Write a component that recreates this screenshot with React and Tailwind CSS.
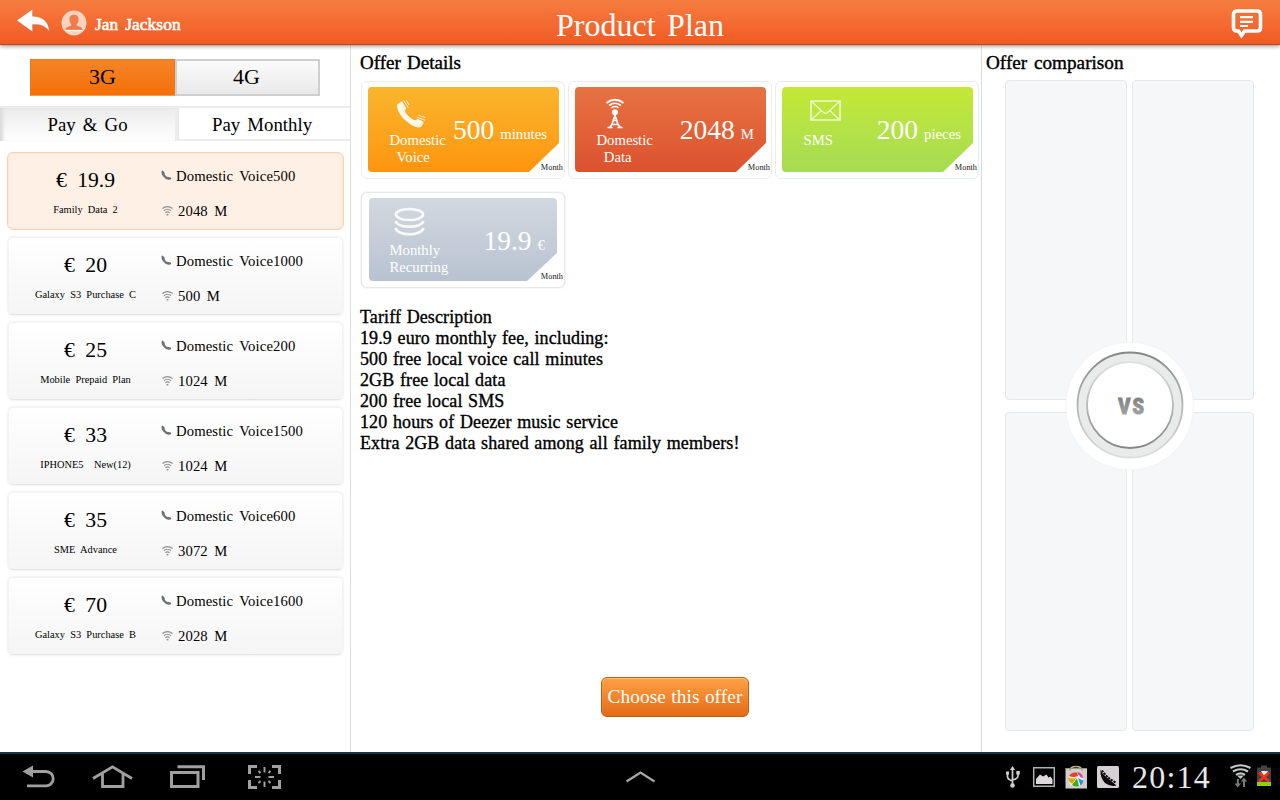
import React from "react";

const plans = [
  { price: "19.9", name: "Family Data 2", voice: "500", data: "2048 M", selected: true },
  { price: "20", name: "Galaxy S3 Purchase C", voice: "1000", data: "500 M" },
  { price: "25", name: "Mobile Prepaid Plan", voice: "200", data: "1024 M" },
  { price: "33", name: "IPHONE5\u00a0 New(12)", voice: "1500", data: "1024 M" },
  { price: "35", name: "SME Advance", voice: "600", data: "3072 M" },
  { price: "70", name: "Galaxy S3 Purchase B", voice: "1600", data: "2028 M" },
];

const tariff = [
  "Tariff Description",
  "19.9 euro monthly fee, including:",
  "500 free local voice call minutes",
  "2GB free local data",
  "200 free local SMS",
  "120 hours of Deezer music service",
  "Extra 2GB data shared among all family members!",
];

function SmallPhone() {
  return (
    <svg className="h-[11px] w-[11px]" viewBox="0 0 11 11">
      <path d="M1.700.4 3.700 2.700Q3.200 4.200 4.600 5.700 6 7.100 7.400 6.900L9.800 7.600 10.200 9Q9 10 7.600 9.800 4.500 9.300 2 6.200.1 3.700.5 1.300z" fill="#6b7274" />
    </svg>
  );
}

function SmallWifi() {
  return (
    <svg className="h-[10px] w-[11px]" viewBox="0 0 11 10" fill="none" stroke="#8c8f8f" strokeWidth="1.100">
      <path d="M.4 2.500Q5.500-1.300 10.600 2.500M1.900 4.700Q5.500 1.900 9.100 4.700M3.400 6.700Q5.500 5 7.600 6.700" />
      <path d="M4.600 8.700h1.800" strokeWidth="1.500" />
    </svg>
  );
}

function PlanRow({ plan }) {
  return (
    <div
      className={
        plan.selected
          ? "flex h-[78px] rounded-[6px] border border-[#fbd3b0] bg-[#fff0e5] shadow-[inset_0_0_2px_#fbd3b0]"
          : "mx-px flex h-[78px] rounded-[5px] border border-[#f3f3f3] border-b-[#e4e4e4] bg-linear-to-b from-white to-[#f5f5f5] shadow-[0_0_3px_#e2e2e2]"
      }
    >
      <div className={"flex flex-col items-center pt-[15px] " + (plan.selected ? "w-[155px]" : "w-[153px]")}>
        <div className="text-[21.7px] leading-6 [word-spacing:5px]">€ {plan.price}</div>
        <div className="mt-[11px] text-[10.4px] leading-[14px] whitespace-nowrap [word-spacing:2.6px]">{plan.name}</div>
      </div>
      <div className={"flex flex-col pt-[14px] text-[14.7px] leading-[18px] tracking-[0.11px] [word-spacing:2.600px] " + (plan.selected ? "-ml-[2px]" : "-ml-[1px]")}>
        <div className="flex items-start">
          <span className="w-[15px] pt-[3px]"><SmallPhone /></span>
          <span>Domestic Voice{plan.voice}</span>
        </div>
        <div className="mt-[17px] flex items-start">
          <span className="w-[17px] pt-[4px] pl-px"><SmallWifi /></span>
          <span>{plan.data}</span>
        </div>
      </div>
    </div>
  );
}

function PhoneIcon() {
  return (
    <svg className="h-[30px] w-[32px]" viewBox="0 0 32 30" fill="#fff" fillOpacity=".9">
      <path d="M1.300 5.200 6 2.300 10.300 9.500 8.800 12C10.500 15.800 15.300 20.200 19.200 21.300L21.800 19.800 27.800 23 25.300 27.800C21.500 29.800 15.500 26.800 9.300 21.300 3.200 15.500.2 8.800 1.300 5.200z" />
      <path d="M7.800 1.500l4.500 7.200M10.300 1.300l2.600 4.500M20.800 18.200l8.300 3M22.500 16.300l6.800 2.300" stroke="#fff" strokeOpacity=".85" strokeWidth="1" fill="none" />
    </svg>
  );
}

function TowerIcon() {
  return (
    <svg className="h-[32px] w-[20px]" viewBox="0 0 20 32" fill="none" stroke="#fff">
      <path d="M1.500 5Q10-1.500 18.500 5" strokeWidth="2" />
      <path d="M4.200 7.500Q10 3 15.800 7.500" strokeWidth="1.700" />
      <path d="M6.500 9.800Q10 7.300 13.500 9.800" strokeWidth="1.500" />
      <circle cx="10" cy="14.300" r="3" fill="#fff" stroke="none" />
      <path d="M10 16v5M9.300 19 7.200 26 4.800 29.500M10.700 19l2.100 7 2.400 3.500M8.500 22.500h3M7 26.500h6" strokeWidth="1.700" />
      <path d="M2.500 29.500h5M12.500 29.500h5" strokeWidth="1.500" />
    </svg>
  );
}

function MailIcon() {
  return (
    <svg className="h-[21px] w-[31px]" viewBox="0 0 31 21" fill="none" stroke="#fff" strokeOpacity=".75">
      <path d="M1 1h29v19H1z" strokeWidth="1.600" />
      <path d="M1 1l12.500 11.500q2 1.600 4 0L30 1M1 20l10.500-9.500M30 20l-10.500-9.500" strokeWidth="1.200" />
    </svg>
  );
}

function CoinsIcon() {
  return (
    <svg className="h-[30px] w-[32px]" viewBox="0 0 32 30" fill="none" stroke="#fff" strokeOpacity=".85" strokeWidth="2.700">
      <ellipse cx="15.500" cy="7.500" rx="13.500" ry="5.500" />
      <path d="M1.500 14C4 21.500 27 21.500 29.500 14M1.500 21C4 29.500 27 29.500 29.500 21" />
    </svg>
  );
}

function OfferCard({ frame, panel, column, icon, iconBox, label, value, unit }) {
  return (
    <div className={"relative rounded-[6px] border bg-white " + frame}>
      <div className={"flex justify-between rounded-[4px] text-white " + panel}>
        <div className={"flex flex-col " + column}>
          <div className={iconBox}>{icon}</div>
          <div className="text-[14.700px] leading-[17px] whitespace-pre">{label}</div>
        </div>
        <div className="flex items-baseline pt-[27px] pr-[12px] leading-[32px]">
          <span className="text-[27.500px]">{value}</span>
          <span className="ml-[6px] text-[14.800px]">{unit}</span>
        </div>
      </div>
      <span className="absolute right-[1px] bottom-[4px] text-[8.300px] leading-[12px] text-[#222]">Month</span>
    </div>
  );
}

const slot = "rounded-[4px] border border-[#e6e8ea] bg-[#f6f7f9]";

export default function App() {
  return (
    <div className="flex h-[800px] w-[1280px] flex-col overflow-hidden bg-white text-black [font-family:'Liberation_Serif',serif]">
      <header className="z-10 flex h-[45px] shrink-0 border-b border-[#b9470f] bg-linear-to-b from-[#f67c40] to-[#f15a22] text-white shadow-[0_1px_4px_#888]">
        <div className="flex flex-1 items-center pr-[17px]">
          <svg className="ml-[16px] h-[26px] w-[35px]" viewBox="0 0 35 26">
            <path d="M.8 11.500 16.500.3v7C26 7.500 32.500 12 33.300 22 29 16.500 23.500 15 16.500 15.500v7.300z" fill="#fff" stroke="#b8461a" strokeOpacity=".4" strokeWidth=".6" />
          </svg>
          <svg className="mt-[2px] ml-[10px] h-[26px] w-[26px]" viewBox="0 0 26 26">
            <circle cx="13" cy="13" r="12.500" fill="#fbd3c0" />
            <path d="M13 4.500c3 0 4.600 2.200 4.600 5 0 2-.8 3.700-1.900 4.700l.2 1.300 4.100 1.700c1 .5 1.500 1.300 1.500 3.300h-17c0-2 .5-2.800 1.500-3.300l4.100-1.700.2-1.300c-1.100-1-1.900-2.700-1.900-4.700 0-2.800 1.600-5 4.600-5z" fill="#f07c4d" />
            <path d="M4.500 20.500h17" stroke="#fff" strokeWidth="1.200" />
          </svg>
          <span className="ml-[8px] pt-[5px] text-[17.300px] tracking-[0.100px] [-webkit-text-stroke:0.600px_white] [word-spacing:2.500px]">Jan Jackson</span>
        </div>
        <h1 className="pt-[3px] text-[32px] leading-[44px] [word-spacing:3.500px]">Product Plan</h1>
        <div className="flex flex-1 items-center justify-end pr-[17px]">
          <svg className="mt-[4px] h-[30px] w-[32px]" viewBox="0 0 32 30" fill="none" stroke="#fff">
            <path d="M6 2h20q3.500 0 3.500 3.500v13q0 3.500-3.500 3.500H13.500L10.500 26.500 7.500 22H6q-3.500 0-3.500-3.500v-13Q2.500 2 6 2z" strokeWidth="3.600" />
            <path d="M9 8.200h13M9 12.800h13M9 17h8" strokeWidth="2.200" />
          </svg>
        </div>
      </header>

      <main className="flex h-[707px] shrink-0">
        <aside className="w-[351px] border-r border-[#dcdcdc]">
          <div className="mt-[14px] ml-[30px] flex h-[37px] w-[290px] text-center text-[22px] leading-[34px]">
            <div className="w-[145px] border border-[#e87a1e] border-b-[#ee9c5a] bg-linear-to-b from-[#f58426] to-[#f56f04]">3G</div>
            <div className="w-[145px] border-2 border-[#cfcfcf] bg-linear-to-b from-[#fbfbfb] to-[#e9e9e9] pr-[2px] leading-[32px]">4G</div>
          </div>
          <div className="mt-[10px] flex h-[35px] border-t-2 border-[#ececec] text-center text-[18.800px] leading-[33px] [word-spacing:2.500px]">
            <div className="w-[175px] bg-linear-to-b from-[#ebebeb] to-white shadow-[inset_4px_0_3px_-1px_#dcdcdc]">Pay &amp; Go</div>
            <div className="flex-1 border-b-2 border-l-4 border-[#ececec] pr-[5px]">Pay Monthly</div>
          </div>
          <div className="mt-[11px] flex flex-col gap-[7px] pr-[6px] pl-[7px]">
            {plans.map((p) => <PlanRow key={p.name} plan={p} />)}
          </div>
        </aside>

        <section className="flex w-[631px] flex-col border-r border-[#dcdcdc]">
          <h2 className="ml-[9px] pt-[7px] text-[19px] leading-[22px] [-webkit-text-stroke:0.400px_black] [word-spacing:1.500px]">Offer Details</h2>
          <div className="mt-[7px] ml-[10px] flex gap-[3px]">
            <OfferCard
              frame="h-[98px] w-[204px] border-[#ededed] pt-[5px] pl-[6px]"
              panel="h-[85px] w-[191px] bg-linear-to-b from-[#f9b52c] to-[#ff950c] [clip-path:polygon(0_0,100%_0,100%_56px,161px_100%,0_100%)]"
              column="pl-[21.500px]" icon={<PhoneIcon />} iconBox="h-[45px] pt-[12px] pl-[6px]"
              label={"Domestic\n  Voice"} value="500" unit="minutes"
            />
            <OfferCard
              frame="h-[98px] w-[204px] border-[#f0ebe9] pt-[5px] pl-[6px]"
              panel="h-[85px] w-[191px] bg-linear-to-b from-[#e87243] to-[#db522e] [clip-path:polygon(0_0,100%_0,100%_56px,161px_100%,0_100%)]"
              column="pl-[21.500px]" icon={<TowerIcon />} iconBox="h-[45px] pt-[11px] pl-[8px]"
              label={"Domestic\n  Data"} value="2048" unit="M"
            />
            <OfferCard
              frame="h-[98px] w-[204px] border-[#e3efe9] pt-[5px] pl-[6px]"
              panel="h-[85px] w-[191px] bg-linear-to-b from-[#c4e834] to-[#a5dc53] [clip-path:polygon(0_0,100%_0,100%_56px,161px_100%,0_100%)]"
              column="pl-[21.500px]" icon={<MailIcon />} iconBox="h-[45px] pt-[13px] pl-[6.500px]"
              label="SMS" value="200" unit="pieces"
            />
          </div>
          <div className="mt-[13px] ml-[10px] flex">
            <OfferCard
              frame="h-[96px] w-[204px] border-[#e9e9e9] pt-[5px] pl-[7px] shadow-[0_0_2px_#ddd]"
              panel="h-[83px] w-[188px] bg-linear-to-b from-[#d2d8e0] to-[#b8c3d0] [clip-path:polygon(0_0,100%_0,100%_55px,158px_100%,0_100%)]"
              column="pl-[20.500px]" icon={<CoinsIcon />} iconBox="h-[44px] pt-[9px] pl-[4px]"
              label={"Monthly\nRecurring"} value="19.9" unit="€"
            />
          </div>
          <div className="mt-[19px] ml-[9px] text-[18px] leading-[21px] tracking-[0.110px] whitespace-nowrap [-webkit-text-stroke:0.350px_black] [word-spacing:1px]">
            {tariff.map((line) => <p key={line}>{line}</p>)}
          </div>
          <button className="mt-auto mb-[35px] ml-[250px] h-[40px] w-[148px] rounded-[6px] border border-[#b5601a] bg-linear-to-b from-[#fda143] to-[#e66a14] text-[19.300px] tracking-[0.080px] whitespace-nowrap text-white shadow-[inset_0_1px_1px_#ffc27e] [word-spacing:0.500px]">Choose this offer</button>
        </section>

        <section className="flex flex-1 flex-col">
          <h2 className="ml-[4px] pt-[7px] text-[19.200px] leading-[22px] [-webkit-text-stroke:0.400px_black] [word-spacing:2px]">Offer comparison</h2>
          <div className="relative mt-[6px] ml-[23px] grid h-[651px] w-[249px] grid-cols-2 grid-rows-2 gap-x-[5px] gap-y-[12px]">
            <div className={slot} />
            <div className={slot} />
            <div className={slot} />
            <div className={slot} />
            <svg className="absolute top-[260px] left-[59px] h-[132px] w-[132px]" viewBox="0 0 132 132">
              <defs>
                <linearGradient id="rim" x1="0" y1="0" x2="0" y2="1">
                  <stop offset="0" stopColor="#858585" />
                  <stop offset=".5" stopColor="#b5b5b5" />
                  <stop offset="1" stopColor="#dedede" />
                </linearGradient>
                <linearGradient id="hub" x1="0" y1="0" x2="0" y2="1">
                  <stop offset="0" stopColor="#e0e0e0" />
                  <stop offset=".5" stopColor="#b8b8b8" />
                  <stop offset="1" stopColor="#868686" />
                </linearGradient>
                <linearGradient id="vs" x1="0" y1="0" x2="0" y2="1">
                  <stop offset="0" stopColor="#777" />
                  <stop offset="1" stopColor="#aaa" />
                </linearGradient>
              </defs>
              <circle cx="65.500" cy="66" r="64" fill="#fff" stroke="#edeff1" strokeWidth=".6" />
              <circle cx="66" cy="65" r="52.500" fill="#e9eaea" stroke="url(#rim)" strokeWidth="1.800" />
              <circle cx="66" cy="65" r="43" fill="#fff" stroke="url(#hub)" strokeWidth="1.800" />
              <g transform="translate(54.200 73.500) scale(.85 1)" fontSize="21.500" fontWeight="900" fontFamily="Roboto, sans-serif" fill="url(#vs)" stroke="url(#vs)" strokeWidth="1">
                <text letterSpacing="2.500">VS</text>
              </g>
            </svg>
          </div>
        </section>
      </main>

      <footer className="flex h-[48px] shrink-0 items-center border-t-2 border-[#0e3a4c] bg-black">
        <svg className="h-[46px] w-[300px]" viewBox="0 754 300 46" fill="none" stroke="#a0a0a0" strokeWidth="3">
          <path d="M32 771.500H46a7.200 7.200 0 0 1 0 14.400H27" strokeWidth="2.800" />
          <path d="M22.500 771.500 33 765.500v12z" fill="#a0a0a0" stroke="none" />
          <path d="M93 778.500 112.500 766.800 132 778.500M102.500 774v12.500h20.500V774" strokeWidth="2.800" />
          <path d="M171.500 772.500H198v14H171.500z" />
          <path d="M177.500 766.800H203.500V780" />
          <path d="M249.500 774v-7.500h7.500M272 766.500h7.500V774M279.500 780v7.500H272M257 787.500h-7.500V780" />
          <path d="M264.500 767v5.500M264.500 781.500v5.500M255 777h5.500M268.500 777h5.500M258.500 771l2 2M270.500 771l-2 2M258.500 783l2-2M270.500 783l-2-2" strokeWidth="1.900" />
        </svg>
        <svg className="ml-[324px] h-[14px] w-[32px]" viewBox="0 0 32 14" fill="none" stroke="#a8a8a8" strokeWidth="2.200">
          <path d="M2.500 11.500 16.500 2.500l14 9" />
        </svg>
        <svg className="ml-[344px] h-[46px] w-[126px]" viewBox="1000 754 126 46">
          <g fill="none" stroke="#cfcfcf" strokeWidth="1.700">
            <path d="M1012.500 769v17M1007.500 773v3.500q0 3 5 4.500M1018 773v3q0 2.500-5.500 4" />
            <circle cx="1012.500" cy="785.500" r="2.300" fill="#cfcfcf" stroke="none" />
            <path d="M1012.500 766l2.700 4h-5.400z" fill="#cfcfcf" stroke="none" />
            <path d="M1006 771.500h3v3h-3zM1016.300 771h3.500v3.500h-3.500z" fill="#cfcfcf" stroke="none" />
          </g>
          <path d="M1033.700 767.700h20.600v18.600h-20.600z" fill="none" stroke="#aab3b0" strokeWidth="1.500" />
          <path d="M1036 784v-5l4-4.500 3 2 3.500-2 2 3 2-1 2 3V784z" fill="#ddd8dc" />
          <path d="M1065.500 768h21.500v20.500h-21.500z" fill="#d1cdd0" />
          <path d="M1070 771q0-4.500 6-4.500t6 4.500" fill="none" stroke="#c2a982" strokeWidth="1.600" />
          <path d="M1065.500 768.500h21.500" stroke="#8a9a77" />
          <circle cx="1075.800" cy="779.500" r="7.500" fill="#eeeeea" />
          <path d="M1069 776q2-4 7.500-3.800l1.500 3.500q-4 2.500-9 .3z" fill="#e8431d" />
          <path d="M1068.200 777.500q4.500 2 8.500-.3l-4.200 6.500q-4.300-1.500-4.300-6.200z" fill="#d9a800" />
          <path d="M1077 778.500l2 7.500q-3.500 1.500-7-1z" fill="#36ac18" />
          <path d="M1078.200 778.300l5.300 2.500q-.8 3.200-3 4.700z" fill="#2992d6" />
          <path d="M1077.500 772q5 1 5.500 6l-2.500-.8q-.8-2.500-3-3.200z" fill="#db3ea7" />
          <rect x="1097" y="766" width="22" height="22" rx="1.500" fill="#d4d0d4" />
          <path d="M1100.500 769.500q1 3.500 4.500 6.500t11.500 9.500q-6 1.500-11.500-2.500-5-5-4.500-13.500z" fill="#050505" />
          <path d="M1102 770.500q4 6.500 13.500 12" fill="none" stroke="#050505" strokeWidth="2" strokeDasharray="2.200 1" />
        </svg>
        <span className="ml-[6px] w-[92px] text-[32px] leading-[44px] tracking-[1.200px] text-[#e8e8e8]">20:14</span>
        <svg className="ml-[4px] h-[46px] w-[50px]" viewBox="1228 754 50 46" fill="none">
          <g stroke="#c4c7c7" strokeWidth="2.200">
            <path d="M1230.500 768q10-5.500 20 0M1233 771.500q7.500-4.500 15 0M1236 774.800q4.500-3 9 0" />
            <path d="M1237 775.500h7l-3.500 3.500z" fill="#c4c7c7" stroke="none" />
          </g>
          <path d="M1238.800 779v4.500h2.200l-3.200 4-3.200-4h2.200V779zM1243 787v-5.500h-2.200l3.200-4 3.200 4H1245V787z" fill="#757a7a" />
          <path d="M1261 765.500h6v2h4V782h-14v-14.500h4z" fill="#414444" />
          <path d="M1257 782h14v4h-14z" fill="#8bd000" />
          <path d="M1261 771h7l-3 7z" fill="#e9e9e9" />
          <path d="M1259 772.500l10 9M1269 772.500l-10 9" stroke="#ff2e12" strokeWidth="2.600" />
        </svg>
      </footer>
    </div>
  );
}
